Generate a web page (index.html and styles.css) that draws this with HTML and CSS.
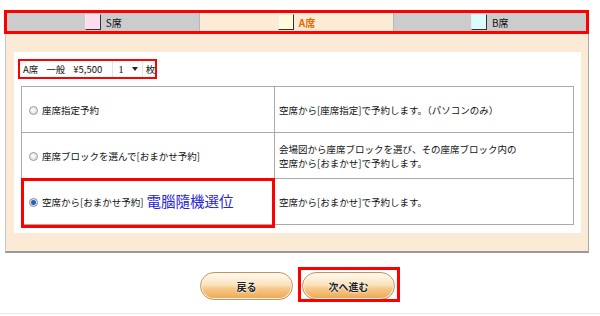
FILE: index.html
```html
<!DOCTYPE html>
<html lang="ja">

<head>
    <meta charset="UTF-8">
    <meta name="viewport" content="width=device-width, initial-scale=1.0">
    <title>座席選択</title>
    <link rel="stylesheet" href="styles.css">
</head>

<body>
    <div class="tabs">
        <div class="tab"><span class="swatch pink"></span>S席</div>
        <div class="tab active"><span class="swatch cream"></span>A席</div>
        <div class="tab"><span class="swatch cyan"></span>B席</div>
    </div>
    <div class="panel">
        <div class="inner">
            <div class="price">
                <span>A席</span>
                <span>一般</span>
                <span>¥5,500</span>
                <span class="select">1<i class="arrow"></i></span>
                <span>枚</span>
            </div>
            <table class="choices">
                <tr>
                    <td class="opt"><span class="radio"></span>座席指定予約</td>
                    <td class="desc">空席から[座席指定]で予約します。（パソコンのみ）</td>
                </tr>
                <tr>
                    <td class="opt"><span class="radio"></span>座席ブロックを選んで[おまかせ予約]</td>
                    <td class="desc">会場図から座席ブロックを選び、その座席ブロック内の<br>空席から[おまかせ]で予約します。</td>
                </tr>
                <tr>
                    <td class="opt marked"><span class="radio on"></span>空席から[おまかせ予約]<span class="note">電腦隨機選位</span></td>
                    <td class="desc">空席から[おまかせ]で予約します。</td>
                </tr>
            </table>
        </div>
    </div>
    <div class="buttons">
        <a class="btn">戻る</a>
        <a class="btn marked">次へ進む</a>
    </div>
    <div class="rule"></div>
</body>

</html>
```

FILE: styles.css
```css
* {
    margin: 0;
    padding: 0;
    box-sizing: border-box;
}

body {
    width: 600px;
    background: #fff;
    font-family: "Noto Sans CJK JP", "Liberation Sans", sans-serif;
    font-size: 10px;
    color: #111;
}

.tabs {
    display: flex;
    width: 585px;
    height: 24px;
    margin: 10px 0 0 4px;
    border: 3px solid #f00;
}

.tab {
    flex: 1;
    display: flex;
    align-items: center;
    justify-content: center;
    background-color: #cccccc;
    font-size: 10px;
}

.tab+.tab {
    border-left: 1px solid #b8b8b8;
}

.tab.active {
    background-color: #fcebd6;
    color: #e86a00;
    font-weight: bold;
}

.swatch {
    flex-shrink: 0;
    width: 16px;
    height: 16px;
    margin-right: 5px;
    border: 1px solid #eee;
    border-right-color: #333;
    border-bottom-color: #333;
}

.pink {
    background-color: #fcdcee;
}

.cream {
    background-color: #fdfbd8;
}

.cyan {
    background-color: #dcfbfd;
}

.panel {
    width: 584px;
    margin-left: 5px;
    padding: 18px 7px 18px 8px;
    background-color: #fbead5;
    border-left: 1px solid #c8c8c8;
    border-right: 1px solid #aaa;
    border-bottom: 2px solid #999;
}

.inner {
    background: #fff;
    padding: 7px 7px 8px 4px;
}

.price {
    display: flex;
    align-items: center;
    gap: 8px;
    width: 139px;
    height: 20px;
    padding-left: 3px;
    border: 2px solid #f00;
    font-size: 9.5px;
    white-space: nowrap;
}

.price span {
    flex-shrink: 0;
}

.select {
    display: flex;
    align-items: center;
    gap: 8px;
    height: 16px;
    padding: 0 4px 0 5px;
    margin-left: 2px;
    margin-right: -5px;
    border-left: 1px solid #e4e4e4;
    border-right: 1px solid #e4e4e4;
    font-family: "Liberation Serif", serif;
    font-size: 11px;
}

.arrow {
    width: 0;
    height: 0;
    border-left: 3px solid transparent;
    border-right: 3px solid transparent;
    border-top: 4px solid #222;
}

.choices {
    width: 553px;
    margin: 7px 0 0 3px;
    border-collapse: collapse;
    border: 1px solid #999;
}

.choices td {
    height: 46px;
    border: 1px solid #aaa;
    vertical-align: middle;
    font-size: 9.5px;
    line-height: 14px;
}

.opt {
    width: 253px;
    padding-left: 7px;
    position: relative;
}

.desc {
    padding-left: 4px;
}

.radio {
    display: inline-block;
    width: 9px;
    height: 9px;
    margin-right: 4px;
    vertical-align: -1px;
    border: 1px solid #9a9a9a;
    border-radius: 50%;
    background: radial-gradient(circle at 40% 40%, #fff, #d4d4d4);
}

.radio.on {
    background: radial-gradient(circle, #2a5db8 0, #2a5db8 2px, #dfe8f5 3px, #fff 5px);
    border-color: #7a8aa8;
}

.note {
    margin-left: 3px;
    font-family: "Noto Sans CJK TC", sans-serif;
    font-size: 14.5px;
    color: #2626d8;
    vertical-align: -1px;
}

.opt.marked::after {
    content: "";
    position: absolute;
    left: -1px;
    top: -1px;
    right: -1px;
    bottom: -4px;
    border: 3px solid #f00;
}

.buttons {
    display: flex;
    justify-content: center;
    gap: 9px;
    padding: 19px 5px 0 0;
    height: 60px;
}

.btn {
    position: relative;
    display: flex;
    align-items: center;
    justify-content: center;
    width: 93px;
    height: 28px;
    border: 1px solid #c8925e;
    border-radius: 14px;
    background: linear-gradient(#fffaf1 0%, #fbe3bd 45%, #f6c98a 60%, #eea652 100%);
    box-shadow: inset 0 0 0 1px #fff6e8;
    font-size: 10px;
    font-weight: bold;
    color: #222;
    text-shadow: 0 0 2px #fff, 0 0 2px #fff;
}

.btn.marked::after {
    content: "";
    position: absolute;
    left: -5px;
    top: -6px;
    right: -6px;
    bottom: -3px;
    border: 3px solid #f00;
}

.rule {
    height: 1px;
    background: #e8e8f0;
}
```
